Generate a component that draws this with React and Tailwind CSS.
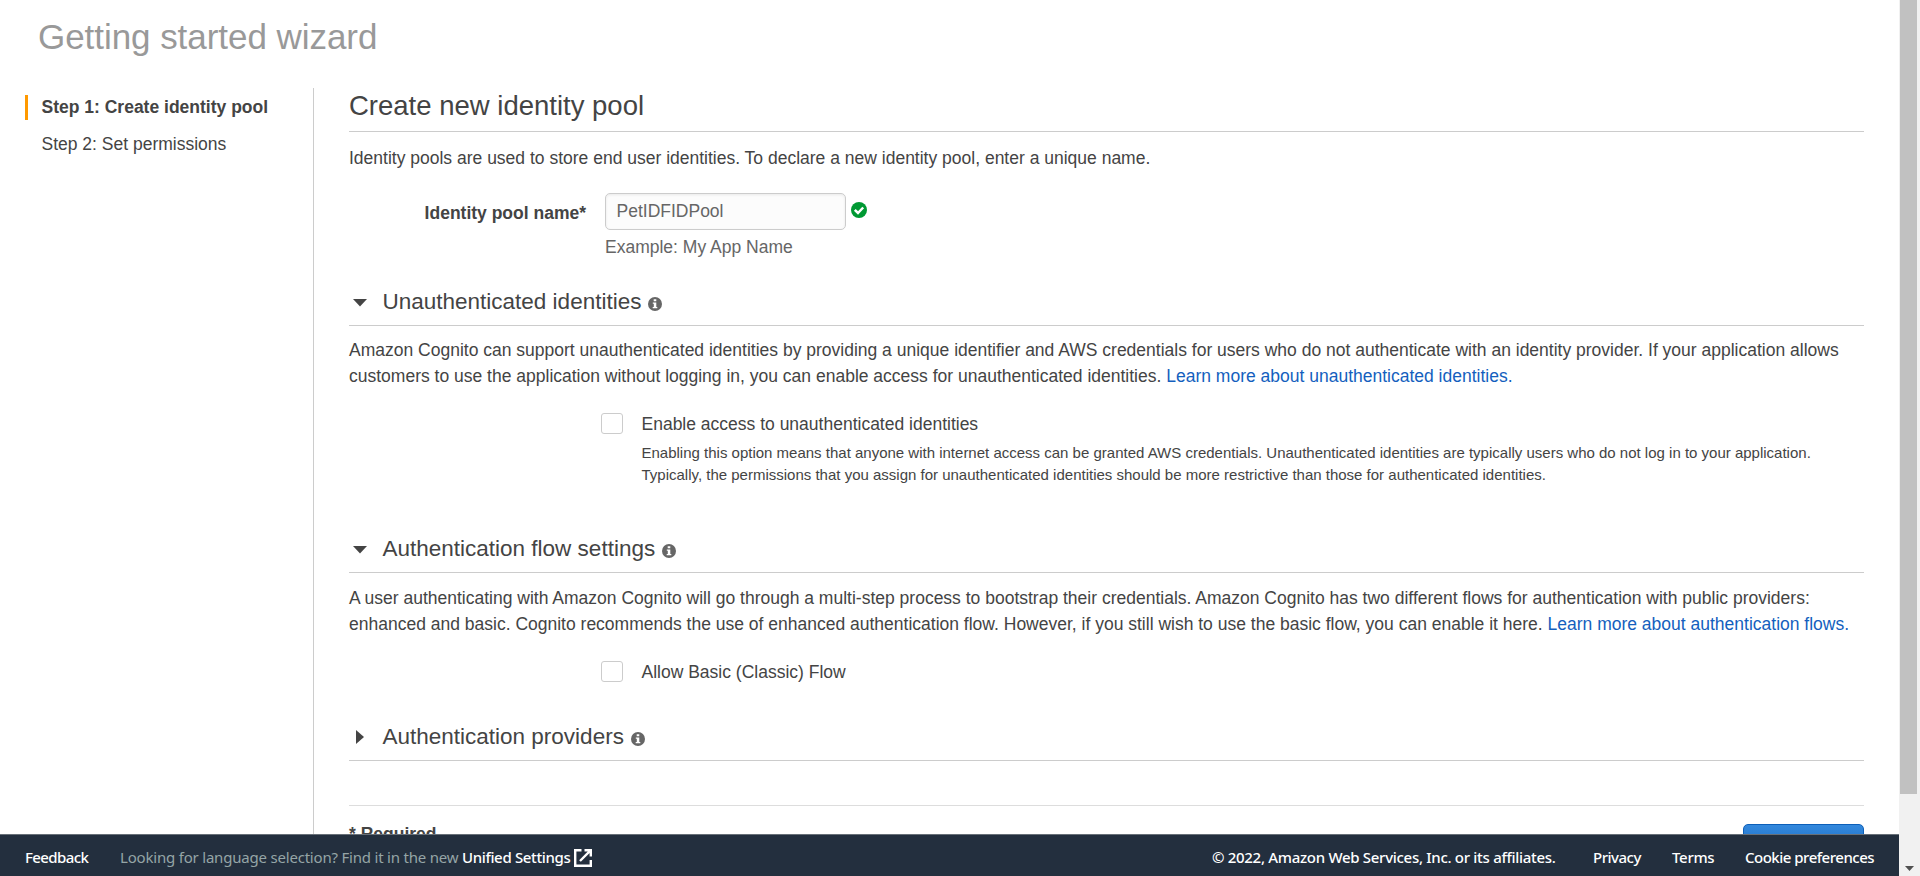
import React from "react";

function InfoIcon() {
  return (
    <svg className="ml-[7px] mt-[3px] size-[14px] shrink-0" viewBox="0 0 14 14">
      <circle cx="7" cy="7" r="7" fill="#666" />
      <path d="M5.7 2.2h2.6v2H5.7zM4.8 5.4h3.5v4.5h1v1.4H4.7V9.9h1.1V6.8h-1z" fill="#fff" />
    </svg>
  );
}

function SectionHeading({ open, title }) {
  return (
    <div className="flex h-[46px] items-center border-b border-[#ccc]">
      <div className="flex w-[33.5px] shrink-0 pl-[4px]">
        {open ? (
          <svg className="h-[8px] w-[14px]" viewBox="0 0 14 8">
            <path d="M0 0h14L7 7.5z" fill="#444" />
          </svg>
        ) : (
          <svg className="-mt-[1px] ml-[3px] h-[14px] w-[9px]" viewBox="0 0 9 14">
            <path d="M0 0v14L8 7z" fill="#444" />
          </svg>
        )}
      </div>
      <h3 className="-mt-[1px] text-[22.5px] leading-[28px]">{title}</h3>
      <InfoIcon />
    </div>
  );
}

function Checkbox() {
  return <span className="mt-[2px] h-[21px] w-[22px] shrink-0 rounded-[3px] border border-[#ccc] bg-white" />;
}

function Sidebar() {
  return (
    <nav className="w-[313px] shrink-0 pl-[25px] pt-[7px]">
      <div className="h-[25px] border-l-3 border-[#f90] pl-[13.5px] font-bold leading-[24px]">
        Step 1: Create identity pool
      </div>
      <div className="mt-[12px] pl-[16.5px] leading-[24px]">Step 2: Set permissions</div>
    </nav>
  );
}

function Footer() {
  return (
    <footer className="flex h-[42px] shrink-0 items-center whitespace-nowrap border-t border-[#687078] bg-[#232f3e] px-[25px] pt-[4px] font-['Noto_Sans',sans-serif] text-[15px] font-medium tracking-[-0.35px] text-white">
      <span className="w-[95px] tracking-[-0.6px]">Feedback</span>
      <span className="font-normal tracking-[-0.2px] text-[#95a5a6]">Looking for language selection? Find it in the new</span>
      <span className="ml-[3.5px]">Unified Settings</span>
      <svg className="ml-[4px] size-[18px]" viewBox="0 0 18 18" fill="none" stroke="#fff" strokeWidth="2.4">
        <path d="M7.500 1.200H1.200v15.600h15.600V11M10.500 1.200h6.300v6.300M16.800 1.200L6 12" />
      </svg>
      <div className="ml-auto flex">
        <span className="w-[381px] tracking-[-0.3px]">© 2022, Amazon Web Services, Inc. or its affiliates.</span>
        <span className="w-[79px] tracking-[-0.5px]">Privacy</span>
        <span className="w-[73px] tracking-[-0.3px]">Terms</span>
        <span className="w-[129px] tracking-[-0.5px]">Cookie preferences</span>
      </div>
    </footer>
  );
}

export default function App() {
  return (
    <div className="flex h-[876px] w-[1920px] overflow-hidden bg-white font-['Liberation_Sans',Arial,sans-serif] text-[17.5px] text-[#444]">
      <div className="flex w-[1899px] flex-col">
        <main className="flex h-[834px] flex-col overflow-hidden">
          <h1 className="h-[88px] shrink-0 pl-[38px] pt-[16px] text-[35px] leading-[42px] tracking-[-0.050px] text-[#999]">
            Getting started wizard
          </h1>
          <div className="flex min-h-0 flex-1">
            <Sidebar />
            <section className="flex-1 border-l border-[#ccc] pl-[35px] pr-[35px]">
              <h2 className="h-[44px] border-b border-[#ccc] text-[27.5px] leading-[35px]">Create new identity pool</h2>
              <p className="pt-[13px] leading-[26px]">
                Identity pools are used to store end user identities. To declare a new identity pool, enter a unique name.
              </p>
              <div className="flex pt-[22px]">
                <label className="w-[256px] pr-[19px] pt-[8px] text-right font-bold leading-[24px]">
                  Identity pool name*
                </label>
                <div>
                  <div className="flex">
                    <div className="h-[37px] w-[241px] rounded-[5px] border border-[#ccc] bg-[#fcfcfc] pl-[10.5px] leading-[34px] text-[#666] shadow-[inset_0_1px_3px_rgba(0,0,0,0.08)]">
                      PetIDFIDPool
                    </div>
                    <svg className="ml-[4.5px] mt-[9px] size-[16px]" viewBox="0 0 16 16">
                      <circle cx="8" cy="8" r="8" fill="#093" />
                      <path d="M3.800 7.800l3.200 3.200 5.200-5.500" fill="none" stroke="#fff" strokeWidth="2.500" />
                    </svg>
                  </div>
                  <div className="pt-[4px] leading-[26px] text-[#666]">Example: My App Name</div>
                </div>
              </div>
              <div className="mt-[20px]">
                <SectionHeading open title="Unauthenticated identities" />
              </div>
              <p className="whitespace-nowrap pt-[11px] leading-[26px]">
                Amazon Cognito can support unauthenticated identities by providing a unique identifier and AWS credentials for users who do not authenticate with an identity provider. If your application allows
                <br />
                customers to use the application without logging in, you can enable access for unauthenticated identities.{" "}
                <a className="text-[#145fbe]">Learn more about unauthenticated identities.</a>
              </p>
              <div className="flex pl-[252px] pt-[22px]">
                <Checkbox />
                <div className="pl-[18.500px]">
                  <div className="leading-[26px]">Enable access to unauthenticated identities</div>
                  <p className="whitespace-nowrap pt-[5px] text-[15px] leading-[22px]">
                    Enabling this option means that anyone with internet access can be granted AWS credentials. Unauthenticated identities are typically users who do not log in to your application.
                    <br />
                    Typically, the permissions that you assign for unauthenticated identities should be more restrictive than those for authenticated identities.
                  </p>
                </div>
              </div>
              <div className="mt-[41px]">
                <SectionHeading open title="Authentication flow settings" />
              </div>
              <p className="whitespace-nowrap pt-[12px] leading-[26px]">
                A user authenticating with Amazon Cognito will go through a multi-step process to bootstrap their credentials. Amazon Cognito has two different flows for authentication with public providers:
                <br />
                enhanced and basic. Cognito recommends the use of enhanced authentication flow. However, if you still wish to use the basic flow, you can enable it here.{" "}
                <a className="text-[#145fbe]">Learn more about authentication flows.</a>
              </p>
              <div className="flex pl-[252px] pt-[22px]">
                <Checkbox />
                <div className="pl-[18.500px] leading-[26px]">Allow Basic (Classic) Flow</div>
              </div>
              <div className="mt-[30px]">
                <SectionHeading title="Authentication providers" />
              </div>
              <div className="mt-[44px] flex justify-between border-t border-[#ddd] pt-[18px]">
                <div className="font-bold leading-[20px]">* Required</div>
                <button className="h-[38px] w-[121px] rounded-[5px] border border-[#0d5fb8] bg-linear-to-b from-[#3388dd] to-[#1166bb]" />
              </div>
            </section>
          </div>
        </main>
        <Footer />
      </div>
      <div className="flex w-[21px] flex-col items-center bg-[#f1f1f1]">
        <div className="ml-[-2px] h-[794px] w-[17px] bg-[#c1c1c1]" />
        <svg className="ml-[-1px] mt-[72px] h-[5px] w-[9px]" viewBox="0 0 9 5">
          <path d="M0 0h9L4.500 5z" fill="#505050" />
        </svg>
      </div>
    </div>
  );
}
